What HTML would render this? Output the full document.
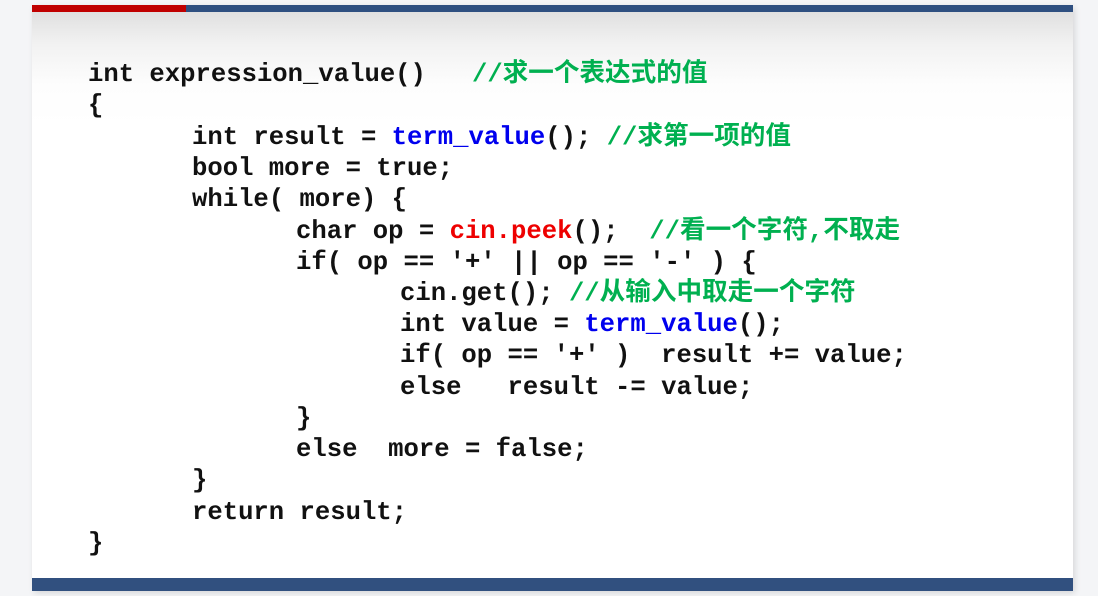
<!DOCTYPE html>
<html><head><meta charset="utf-8"><style>
html,body{margin:0;padding:0;}
body{width:1098px;height:596px;background:#f4f5f7;position:relative;overflow:hidden;}
.slide{position:absolute;left:32px;top:5px;width:1041px;height:586px;background:linear-gradient(#dcdcdc 0px,#f2f2f2 40px,#fdfdfd 80px,#fff 120px);box-shadow:2px 2px 6px rgba(0,0,0,0.12);}
.red{position:absolute;left:32px;top:5px;width:154px;height:7px;background:#c00000;}
.blue{position:absolute;left:186px;top:5px;width:887px;height:7px;background:#2e4f80;}
.bot{position:absolute;left:32px;top:578px;width:1041px;height:13px;background:#31507f;}
.l{position:absolute;white-space:pre;font-family:"Liberation Mono","Noto Sans CJK SC",monospace;font-weight:bold;font-size:25.6px;line-height:30px;color:#111;}
.b{color:#0000ee}.r{color:#ee0000}.g{color:#00b050}
</style></head><body>
<div class="slide"></div><div class="red"></div><div class="blue"></div><div class="bot"></div>
<div class="l" style="left:88px;top:60px">int expression_value()   <span class="g">//求一个表达式的值</span></div>
<div class="l" style="left:88px;top:91px">{</div>
<div class="l" style="left:192px;top:123px">int result = <span class="b">term_value</span>(); <span class="g">//求第一项的值</span></div>
<div class="l" style="left:192px;top:154px">bool more = true;</div>
<div class="l" style="left:192px;top:185px">while( more) {</div>
<div class="l" style="left:296px;top:217px">char op = <span class="r">cin.peek</span>();  <span class="g">//看一个字符,不取走</span></div>
<div class="l" style="left:296px;top:248px">if( op == '+' || op == '-' ) {</div>
<div class="l" style="left:400px;top:279px">cin.get(); <span class="g">//从输入中取走一个字符</span></div>
<div class="l" style="left:400px;top:310px">int value = <span class="b">term_value</span>();</div>
<div class="l" style="left:400px;top:341px">if( op == '+' )  result += value;</div>
<div class="l" style="left:400px;top:373px">else   result -= value;</div>
<div class="l" style="left:296px;top:404px">}</div>
<div class="l" style="left:296px;top:435px">else  more = false;</div>
<div class="l" style="left:192px;top:466px">}</div>
<div class="l" style="left:192px;top:498px">return result;</div>
<div class="l" style="left:88px;top:529px">}</div>
</body></html>
